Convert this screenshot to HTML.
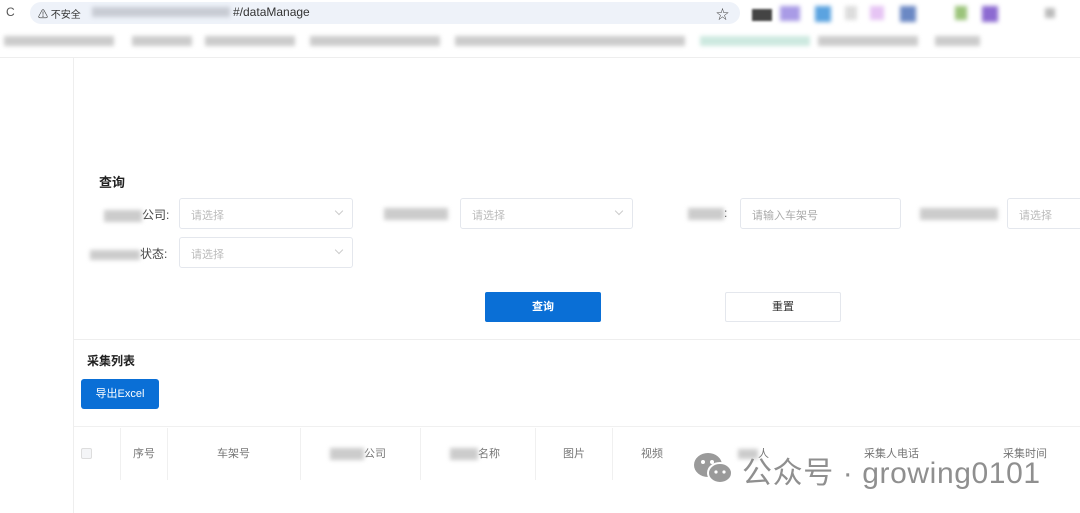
<!DOCTYPE html>
<html><head><meta charset="utf-8"><style>
*{margin:0;padding:0;box-sizing:border-box}
body{width:1080px;height:513px;overflow:hidden;background:#fff;font-family:"Liberation Sans","Noto Sans CJK SC",sans-serif;position:relative;font-size:12px;color:#333}
.a{position:absolute}
.sel{position:absolute;height:31px;border:1px solid #e4e7ed;border-radius:3px;color:#bbb;font-size:11px;padding:8px 11px}
.sel .ch{position:absolute;right:10px;top:9px;width:6px;height:6px;border-right:1px solid #ccc;border-bottom:1px solid #ccc;transform:rotate(45deg)}
.lbl{position:absolute;font-size:12px;color:#444}
.blur{display:inline-block;background:#ccc;filter:blur(2px);vertical-align:middle}
.th{position:absolute;top:445px;font-size:11px;color:#777}
.vl{position:absolute;top:428px;height:52px;width:1px;background:#f0f0f0}
.bm{position:absolute;top:36px;height:10px;background:#ccc;filter:blur(2px)}
</style></head><body>
<div class="a" style="left:0;top:0;width:1080px;height:28px;background:#fff"></div>
<div class="a" style="left:6px;top:5px;font-size:12px;color:#555">C</div>
<div class="a" style="left:30px;top:2px;width:710px;height:22px;background:#eef2f9;border-radius:11px"></div>
<div class="a" style="left:38px;top:6px;font-size:10px;color:#333">⚠ 不安全</div>
<div class="a" style="left:92px;top:7px;width:138px;height:10px;background:#c8ccd4;filter:blur(2px)"></div>
<div class="a" style="left:233px;top:5px;font-size:12px;color:#333">#/dataManage</div>
<div class="a" style="left:716px;top:4px;font-size:13px;color:#444">☆</div>
<div class="a" style="left:752px;top:9px;width:20px;height:12px;background:#444;filter:blur(1px)"></div>
<div class="a" style="left:780px;top:6px;width:20px;height:15px;background:#a99be6;filter:blur(2px)"></div>
<div class="a" style="left:815px;top:6px;width:16px;height:16px;background:#5ba3e0;filter:blur(2px)"></div>
<div class="a" style="left:845px;top:6px;width:12px;height:14px;background:#ddd;filter:blur(2px)"></div>
<div class="a" style="left:870px;top:6px;width:14px;height:14px;background:#e6c4f4;filter:blur(2px)"></div>
<div class="a" style="left:900px;top:6px;width:16px;height:16px;background:#6b88c4;filter:blur(2px)"></div>
<div class="a" style="left:955px;top:6px;width:12px;height:14px;background:#9bc47a;filter:blur(2px)"></div>
<div class="a" style="left:982px;top:6px;width:16px;height:16px;background:#8c6ad1;filter:blur(2px)"></div>
<div class="a" style="left:1045px;top:8px;width:10px;height:10px;background:#bbb;filter:blur(2px)"></div>
<div class="bm" style="left:4px;width:110px"></div>
<div class="bm" style="left:132px;width:60px"></div>
<div class="bm" style="left:205px;width:90px"></div>
<div class="bm" style="left:310px;width:130px"></div>
<div class="bm" style="left:455px;width:230px"></div>
<div class="bm" style="left:700px;width:110px;background:#cde9e0"></div>
<div class="bm" style="left:818px;width:100px"></div>
<div class="bm" style="left:935px;width:45px"></div>
<div class="a" style="left:0;top:57px;width:1080px;height:1px;background:#eee"></div>
<div class="a" style="left:73px;top:58px;width:1px;height:455px;background:#eee"></div>

<div class="a" style="left:99px;top:172px;font-size:13px;font-weight:bold;color:#222">查询</div>
<div class="lbl" style="left:104px;top:206px"><span class="blur" style="width:38px;height:12px"></span>公司:</div>
<div class="sel" style="left:179px;top:198px;width:174px">请选择<span class="ch"></span></div>
<div class="lbl" style="left:384px;top:206px"><span class="blur" style="width:64px;height:12px"></span></div>
<div class="sel" style="left:460px;top:198px;width:173px">请选择<span class="ch"></span></div>
<div class="lbl" style="left:688px;top:206px"><span class="blur" style="width:36px;height:12px"></span>:</div>
<div class="sel" style="left:740px;top:198px;width:161px;color:#aaa">请输入车架号</div>
<div class="lbl" style="left:920px;top:206px"><span class="blur" style="width:78px;height:12px"></span></div>
<div class="sel" style="left:1007px;top:198px;width:90px">请选择</div>
<div class="lbl" style="left:90px;top:245px"><span class="blur" style="width:50px;height:10px"></span>状态:</div>
<div class="sel" style="left:179px;top:237px;width:174px">请选择<span class="ch"></span></div>
<div class="a" style="left:485px;top:292px;width:116px;height:30px;background:#0a6fd6;border-radius:2px;color:#fff;font-size:11px;text-align:center;line-height:30px;font-weight:bold">查询</div>
<div class="a" style="left:725px;top:292px;width:116px;height:30px;border:1px solid #e4e7ed;border-radius:2px;color:#333;font-size:11px;text-align:center;line-height:28px">重置</div>
<div class="a" style="left:74px;top:339px;width:1006px;height:1px;background:#eee"></div>
<div class="a" style="left:87px;top:352px;font-size:12px;font-weight:bold;color:#222">采集列表</div>
<div class="a" style="left:81px;top:379px;width:78px;height:30px;background:#0a6fd6;border-radius:3px;color:#fff;font-size:11px;text-align:center;line-height:30px">导出Excel</div>
<div class="a" style="left:74px;top:426px;width:1006px;height:1px;background:#f0f0f0"></div>
<div class="a" style="left:81px;top:448px;width:11px;height:11px;border:1px solid #ddd;background:#f4f5f7;border-radius:2px"></div>
<div class="vl" style="left:120px"></div><div class="vl" style="left:167px"></div><div class="vl" style="left:300px"></div><div class="vl" style="left:420px"></div><div class="vl" style="left:535px"></div><div class="vl" style="left:612px"></div>
<div class="th" style="left:133px">序号</div>
<div class="th" style="left:217px">车架号</div>
<div class="th" style="left:330px"><span class="blur" style="width:34px;height:12px"></span>公司</div>
<div class="th" style="left:450px"><span class="blur" style="width:28px;height:12px"></span>名称</div>
<div class="th" style="left:563px">图片</div>
<div class="th" style="left:641px">视频</div>
<div class="th" style="left:738px"><span class="blur" style="width:20px;height:10px"></span>人</div>
<div class="th" style="left:864px">采集人电话</div>
<div class="th" style="left:1003px">采集时间</div>
<svg class="a" style="left:693px;top:451px" width="44" height="36" viewBox="0 0 44 36"><ellipse cx="15" cy="14" rx="14" ry="12" fill="#9a9a9a"/><ellipse cx="27" cy="22" rx="12" ry="10" fill="#9a9a9a" stroke="#fff" stroke-width="2"/><circle cx="10" cy="11" r="2" fill="#fff"/><circle cx="19" cy="11" r="2" fill="#fff"/><circle cx="23" cy="21" r="1.6" fill="#fff"/><circle cx="31" cy="21" r="1.6" fill="#fff"/></svg>
<div class="a" style="left:742px;top:448px;font-size:30px;letter-spacing:0.6px;color:#8f8f8f;font-family:'Liberation Sans','Noto Sans CJK SC',sans-serif;white-space:nowrap">公众号 · growing0101</div>
</body></html>
